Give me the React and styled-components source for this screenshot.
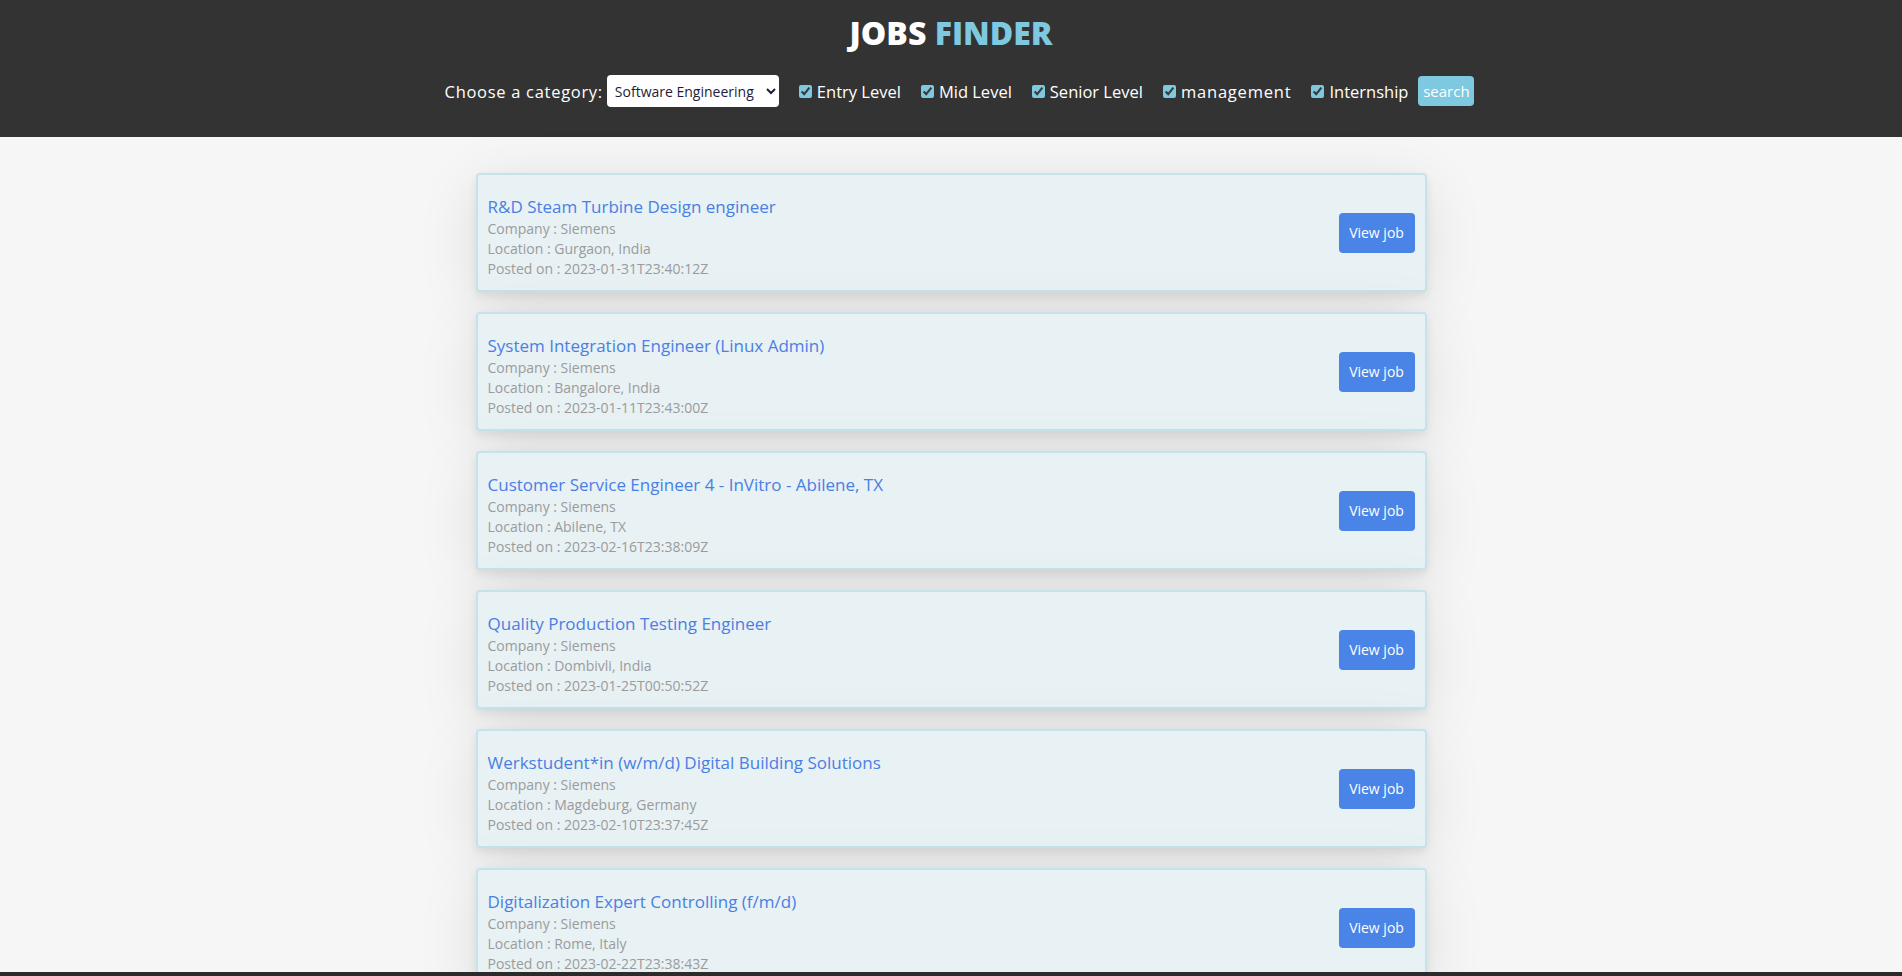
import React from "react";
import styled, { createGlobalStyle } from "styled-components";

const GlobalStyle = createGlobalStyle`
  html { scrollbar-width: none; }
  html::-webkit-scrollbar { display: none; }
  body {
    margin: 0;
    background: #f6f6f6;
    font-family: "Open Sans", "Noto Sans", sans-serif;
  }
`;

const Header = styled.header`
  background: #333333;
  padding: 9px 0 30px;
  display: flex;
  flex-direction: column;
  align-items: center;
  gap: 18px;
`;

const Title = styled.h1`
  margin: 0;
  font-size: 32px;
  line-height: 48px;
  font-weight: 800;
  color: #ffffff;
`;

const Accent = styled.span`
  color: #7ec8e0;
`;

const Controls = styled.form`
  display: flex;
  align-items: center;
  height: 32px;
  padding-left: 17px;
  color: #ffffff;
  font-size: 16.5px;
`;

const Label = styled.span`
  margin-right: 4px;
  letter-spacing: 0.7px;
`;

const Select = styled.select`
  height: 32px;
  width: 172px;
  border: none;
  border-radius: 4px;
  background: #ffffff;
  color: #1c1c3a;
  font-family: inherit;
  font-size: 14px;
  padding: 0 4px;
  margin-right: 20px;
`;

const Check = styled.label`
  display: flex;
  align-items: center;
  margin-right: ${(p) => p.$gap}px;
  letter-spacing: ${(p) => p.$spacing}px;
  cursor: pointer;
`;

const Box = styled.input`
  width: 13px;
  height: 13px;
  margin: 0 5px 0 0;
  accent-color: #7ec8e0;
`;

const SearchButton = styled.button`
  height: 30px;
  width: 56px;
  border: none;
  border-radius: 4px;
  background: #7ec8e0;
  color: #ffffff;
  font-family: inherit;
  font-size: 15px;
  padding: 0;
`;

const Main = styled.main`
  padding: 36px 0 40px;
  display: flex;
  flex-direction: column;
  align-items: center;
  gap: 20px;
`;

const Card = styled.article`
  width: 50%;
  box-sizing: border-box;
  background: #e8f1f4;
  border: 2px solid #c4e3ea;
  border-radius: 4px;
  padding: 10px;
  display: flex;
  align-items: center;
  justify-content: space-between;
  box-shadow: 0 12px 60px rgba(0, 0, 0, 0.1), 0 4px 10px rgba(0, 0, 0, 0.08);
`;

const Info = styled.div`
  display: flex;
  flex-direction: column;
  padding: 10px 0 1px;
`;

const JobTitle = styled.h3`
  margin: 0;
  font-size: 17px;
  line-height: 24px;
  font-weight: 400;
  color: #4a7fe3;
`;

const Meta = styled.p`
  margin: 0;
  font-size: 14px;
  line-height: 20px;
  color: #9b9b9b;
`;

const ViewButton = styled.button`
  width: 76px;
  height: 40px;
  border: none;
  border-radius: 4px;
  background: #4a84e6;
  color: #ffffff;
  font-family: inherit;
  font-size: 14px;
  padding: 0;
  cursor: pointer;
`;

const Footer = styled.div`
  position: fixed;
  left: 0;
  right: 0;
  bottom: 0;
  height: 4px;
  background: #2b2b2b;
`;

const levels = [
  ["Entry Level", 20, 0],
  ["Mid Level", 20, 0],
  ["Senior Level", 20, 0],
  ["management", 20, 0.8],
  ["Internship", 10, 0],
];

const jobs = [
  ["R&D Steam Turbine Design engineer", "Gurgaon, India", "2023-01-31T23:40:12Z"],
  ["System Integration Engineer (Linux Admin)", "Bangalore, India", "2023-01-11T23:43:00Z"],
  ["Customer Service Engineer 4 - InVitro - Abilene, TX", "Abilene, TX", "2023-02-16T23:38:09Z"],
  ["Quality Production Testing Engineer", "Dombivli, India", "2023-01-25T00:50:52Z"],
  ["Werkstudent*in (w/m/d) Digital Building Solutions", "Magdeburg, Germany", "2023-02-10T23:37:45Z"],
  ["Digitalization Expert Controlling (f/m/d)", "Rome, Italy", "2023-02-22T23:38:43Z"],
  ["Software Developer C++ (f/m/d)", "Erlangen, Germany", "2023-02-08T23:41:10Z"],
  ["Embedded Software Engineer", "Pune, India", "2023-01-19T23:39:27Z"],
];

export default function App() {
  return (
    <>
      <GlobalStyle />
      <Header>
        <Title>
          JOBS <Accent>FINDER</Accent>
        </Title>
        <Controls onSubmit={(e) => e.preventDefault()}>
          <Label>Choose a category:</Label>
          <Select defaultValue="se">
            <option value="se">Software Engineering</option>
            <option value="ds">Data Science</option>
            <option value="mk">Marketing</option>
          </Select>
          {levels.map(([name, gap, spacing]) => (
            <Check key={name} $gap={gap} $spacing={spacing}>
              <Box type="checkbox" defaultChecked />
              {name}
            </Check>
          ))}
          <SearchButton type="submit">search</SearchButton>
        </Controls>
      </Header>
      <Main>
        {jobs.map(([title, loc, date]) => (
          <Card key={title}>
            <Info>
              <JobTitle>{title}</JobTitle>
              <Meta>Company : Siemens</Meta>
              <Meta>Location : {loc}</Meta>
              <Meta>Posted on : {date}</Meta>
            </Info>
            <ViewButton>View job</ViewButton>
          </Card>
        ))}
      </Main>
      <Footer />
    </>
  );
}
